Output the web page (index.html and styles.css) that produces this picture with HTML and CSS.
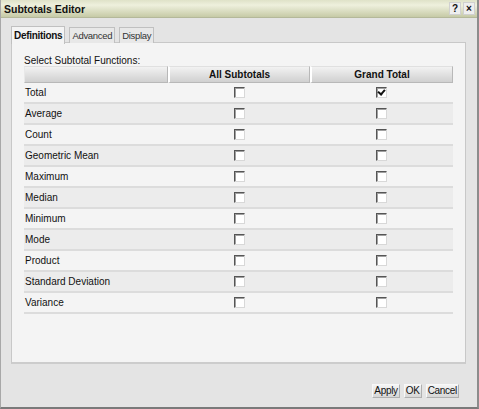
FILE: index.html
```html
<!doctype html>
<html lang="en">
<head>
  <meta charset="UTF-8">
  <title>Subtotals Editor</title>
  <link rel="stylesheet" href="styles.css">
</head>
<body>
  <div class="window">
    <div class="titlebar">
      <span class="title">Subtotals Editor</span>
      <span class="tools">
        <span class="tool">?</span>
        <span class="tool">&#215;</span>
      </span>
    </div>
    <div class="body">
      <div class="tabs">
        <div class="tab active">Definitions</div>
        <div class="tab">Advanced</div>
        <div class="tab">Display</div>
      </div>
      <div class="panel">
        <div class="caption">Select Subtotal Functions:</div>
        <table class="grid">
          <thead>
            <tr>
              <th class="name-col"></th>
              <th class="all-col">All Subtotals</th>
              <th class="grand-col">Grand Total</th>
            </tr>
          </thead>
          <tbody>
            <tr><td>Total</td><td><span class="cb"></span></td><td><span class="cb checked"></span></td></tr>
            <tr><td>Average</td><td><span class="cb"></span></td><td><span class="cb"></span></td></tr>
            <tr><td>Count</td><td><span class="cb"></span></td><td><span class="cb"></span></td></tr>
            <tr><td>Geometric Mean</td><td><span class="cb"></span></td><td><span class="cb"></span></td></tr>
            <tr><td>Maximum</td><td><span class="cb"></span></td><td><span class="cb"></span></td></tr>
            <tr><td>Median</td><td><span class="cb"></span></td><td><span class="cb"></span></td></tr>
            <tr><td>Minimum</td><td><span class="cb"></span></td><td><span class="cb"></span></td></tr>
            <tr><td>Mode</td><td><span class="cb"></span></td><td><span class="cb"></span></td></tr>
            <tr><td>Product</td><td><span class="cb"></span></td><td><span class="cb"></span></td></tr>
            <tr><td>Standard Deviation</td><td><span class="cb"></span></td><td><span class="cb"></span></td></tr>
            <tr><td>Variance</td><td><span class="cb"></span></td><td><span class="cb"></span></td></tr>
          </tbody>
        </table>
      </div>
      <div class="buttons">
        <button class="btn">Apply</button>
        <button class="btn">OK</button>
        <button class="btn">Cancel</button>
      </div>
    </div>
  </div>
</body>
</html>
```
FILE: styles.css
```css
body {
    margin: 0;
    font-family: "Liberation Sans", Arial, sans-serif;
    font-size: 10px;
    color: #111;
}
.window {
    width: 479px;
    height: 409px;
    box-sizing: border-box;
    background-color: #e4e4e4;
    border-left: 1px solid #a8a8a8;
    border-right: 2px solid #8c8c8c;
    border-bottom: 2px solid #7a7a7a;
    display: flex;
    flex-direction: column;
}
.titlebar {
    height: 18px;
    box-sizing: border-box;
    background: linear-gradient(#dfe2c8, #eef0dd 30%, #c6caa6);
    border-bottom: 1px solid #b4b89a;
    display: flex;
    align-items: center;
    justify-content: space-between;
    padding: 0 2px 0 3px;
}
.title {
    font-weight: bold;
    font-size: 10.5px;
}
.tools {
    display: flex;
    gap: 2px;
}
.tool {
    width: 10px;
    height: 11px;
    background-color: #eeeeee;
    border: 1px solid #d0d0d0;
    font-weight: bold;
    font-size: 10px;
    line-height: 11px;
    text-align: center;
}
.body {
    flex: 1;
    padding: 8px 10px 0 10px;
    display: flex;
    flex-direction: column;
}
.tabs {
    display: flex;
    gap: 4px;
    height: 17px;
    position: relative;
    z-index: 1;
}
.tab {
    height: 15px;
    margin-top: 1px;
    padding: 0 2px;
    line-height: 15px;
    font-size: 9.5px;
    letter-spacing: -0.3px;
    background-color: #e8e8e8;
    border: 1px solid #c0c0c0;
    border-bottom: none;
    color: #333;
}
.tab.active {
    margin-top: 0;
    height: 17px;
    line-height: 17px;
    font-size: 10px;
    background-color: #f4f4f4;
    font-weight: bold;
    color: #111;
}
.panel {
    height: 322px;
    box-sizing: border-box;
    width: 455px;
    margin-top: -1px;
    background-color: #f4f4f4;
    border: 1px solid #c8c8c8;
    border-bottom: 2px solid #cccccc;
    padding: 13px 12px 0 12px;
}
.caption {
    height: 10px;
    line-height: 10px;
}
.grid {
    width: 429px;
    table-layout: fixed;
    border-collapse: separate;
    border-spacing: 0;
}
.grid th {
    height: 15px;
    padding: 0;
    background: linear-gradient(#f2f2f2, #d0d0d0);
    border: 1px solid #b8b8b8;
    border-left-color: #e8e8e8;
    border-top-color: #e0e0e0;
    font-weight: bold;
    text-align: center;
}
.grid th + th {
    border-left: 2px solid #ffffff;
}
.grid .name-col {
    width: 142px;
}
.grid .all-col {
    width: 139px;
}
.grid td {
    height: 19px;
    padding: 0;
    border-bottom: 2px solid #dcdcdc;
    text-align: center;
}
.grid td:first-child {
    text-align: left;
    padding-left: 1px;
}
.grid tbody tr:nth-child(even) td {
    background-color: #ececec;
}
.cb {
    display: inline-block;
    vertical-align: middle;
    width: 9px;
    height: 9px;
    background-color: #ffffff;
    border: 1px solid #d8d8d8;
    border-top-color: #555555;
    border-left-color: #555555;
    box-shadow: inset 1px 1px 0 #a0a0a0;
    position: relative;
}
.cb.checked::after {
    content: "";
    position: absolute;
    left: 2px;
    top: 0px;
    width: 3px;
    height: 5px;
    border: solid #111;
    border-width: 0 2px 2px 0;
    transform: rotate(40deg);
}
.buttons {
    display: flex;
    justify-content: flex-end;
    gap: 4px;
    padding: 20px 8px 0 0;
}
.btn {
    font-family: "Liberation Sans", Arial, sans-serif;
    font-size: 10px;
    letter-spacing: -0.3px;
    height: 14px;
    padding: 0 1px;
    background: linear-gradient(#f4f4f4, #d6d6d6);
    border: 1px solid #b0b0b0;
    border-top-color: #f8f8f8;
    border-left-color: #f8f8f8;
    color: #111;
    line-height: 12px;
}
```
